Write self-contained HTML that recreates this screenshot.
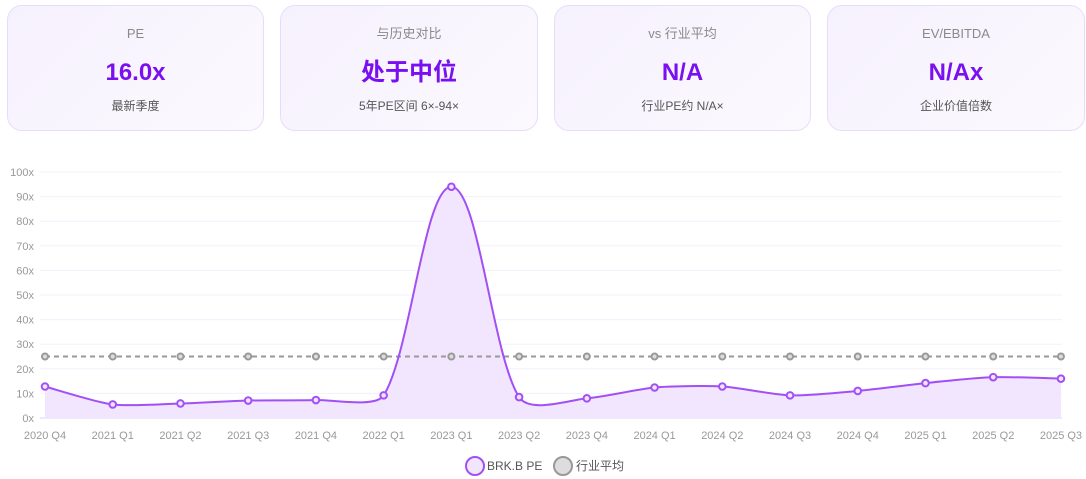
<!DOCTYPE html>
<html><head><meta charset="utf-8"><style>
body{margin:0;width:1086px;height:479px;background:#fff;font-family:"Liberation Sans","Noto Sans CJK SC",sans-serif;position:relative;overflow:hidden}
.card{position:absolute;top:5px;height:126px;border:1px solid #e8dcfb;border-radius:15px;background:linear-gradient(135deg,#f6f1fe,#fbf9fe);text-align:center;box-sizing:border-box}
.t,.v,.s{position:absolute;width:100%;line-height:20px;height:20px}
.t{top:18px;font-size:13px;color:#8a8a8a}
.v{top:52px;font-size:24px;line-height:30px;height:30px;font-weight:bold;color:#7a10f0}
.s{top:90px;font-size:12px;color:#555}
svg{position:absolute;left:0;top:0}
</style></head><body>
<div class="card" style="left:7px;width:257px"><div class="t">PE</div><div class="v">16.0x</div><div class="s">最新季度</div></div>
<div class="card" style="left:280px;width:258px"><div class="t">与历史对比</div><div class="v">处于中位</div><div class="s">5年PE区间 6×-94×</div></div>
<div class="card" style="left:554px;width:257px"><div class="t">vs 行业平均</div><div class="v">N/A</div><div class="s">行业PE约 N/A×</div></div>
<div class="card" style="left:827px;width:258px"><div class="t">EV/EBITDA</div><div class="v">N/Ax</div><div class="s">企业价值倍数</div></div>
<svg id="c" width="1086" height="479" font-family="Liberation Sans, Noto Sans CJK SC, sans-serif"></svg>
<script>
var s=document.getElementById('c'),h='';
var vals=[12.8,5.5,5.9,7.1,7.3,9.2,94,8.5,8,12.4,12.8,9.2,11,14.2,16.6,16.0];
var labs=['2020 Q4','2021 Q1','2021 Q2','2021 Q3','2021 Q4','2022 Q1','2023 Q1','2023 Q2','2023 Q4','2024 Q1','2024 Q2','2024 Q3','2024 Q4','2025 Q1','2025 Q2','2025 Q3'];
function X(i){return 45+i*67.73}function Y(v){return 418-v*2.46}
for(var k=0;k<=10;k++){var y=Y(k*10);h+='<line x1="40" x2="1062" y1="'+y+'" y2="'+y+'" stroke="'+(k==0?'#ddd0f5':'#f3f0fb')+'"/>';h+='<text x="34" y="'+(y+4)+'" font-size="11" fill="#999" text-anchor="end">'+k*10+'x</text>';}
labs.forEach(function(l,i){h+='<text x="'+X(i)+'" y="439" font-size="11" fill="#999" text-anchor="middle">'+l+'</text>'});
var pts=vals.map(function(v,i){return[X(i),Y(v)]});
var d='M'+pts[0][0]+','+pts[0][1];
for(var i=0;i<pts.length-1;i++){var p0=pts[i-1]||pts[i],p1=pts[i],p2=pts[i+1],p3=pts[i+2]||p2;
var t1=(i==5||i==6)?0.2:0.12, t2=(i==5||i==6)?0.2:0.12;
if(i==4)t2=0.06; if(i==7)t1=0.08;
d+=' C'+(p1[0]+(p2[0]-p0[0])*t1)+','+(p1[1]+(p2[1]-p0[1])*t1)+' '+(p2[0]-(p3[0]-p1[0])*t2)+','+(p2[1]-(p3[1]-p1[1])*t2)+' '+p2[0]+','+p2[1];}
h+='<path d="'+d+' L'+X(15)+',418 L45,418 Z" fill="#f1e6fe"/>';
h+='<line x1="45" x2="1061" y1="'+Y(25)+'" y2="'+Y(25)+'" stroke="#999" stroke-width="2" stroke-dasharray="5,4"/>';
for(var i=0;i<16;i++)h+='<circle cx="'+X(i)+'" cy="'+Y(25)+'" r="3" fill="#ddd" stroke="#999" stroke-width="2"/>';
h+='<path d="'+d+'" fill="none" stroke="#a24ff5" stroke-width="2"/>';
pts.forEach(function(p){h+='<circle cx="'+p[0]+'" cy="'+p[1]+'" r="3.3" fill="#f1e6fe" stroke="#a24ff5" stroke-width="2"/>'});
h+='<circle cx="475" cy="466" r="9" fill="#f1e6fe" stroke="#a24ff5" stroke-width="2"/><text x="487" y="470" font-size="12" fill="#555">BRK.B PE</text>';
h+='<circle cx="563" cy="466" r="9" fill="#ddd" stroke="#999" stroke-width="2"/><text x="576" y="470" font-size="12" fill="#555">行业平均</text>';
s.innerHTML=h;
</script>
</body></html>
